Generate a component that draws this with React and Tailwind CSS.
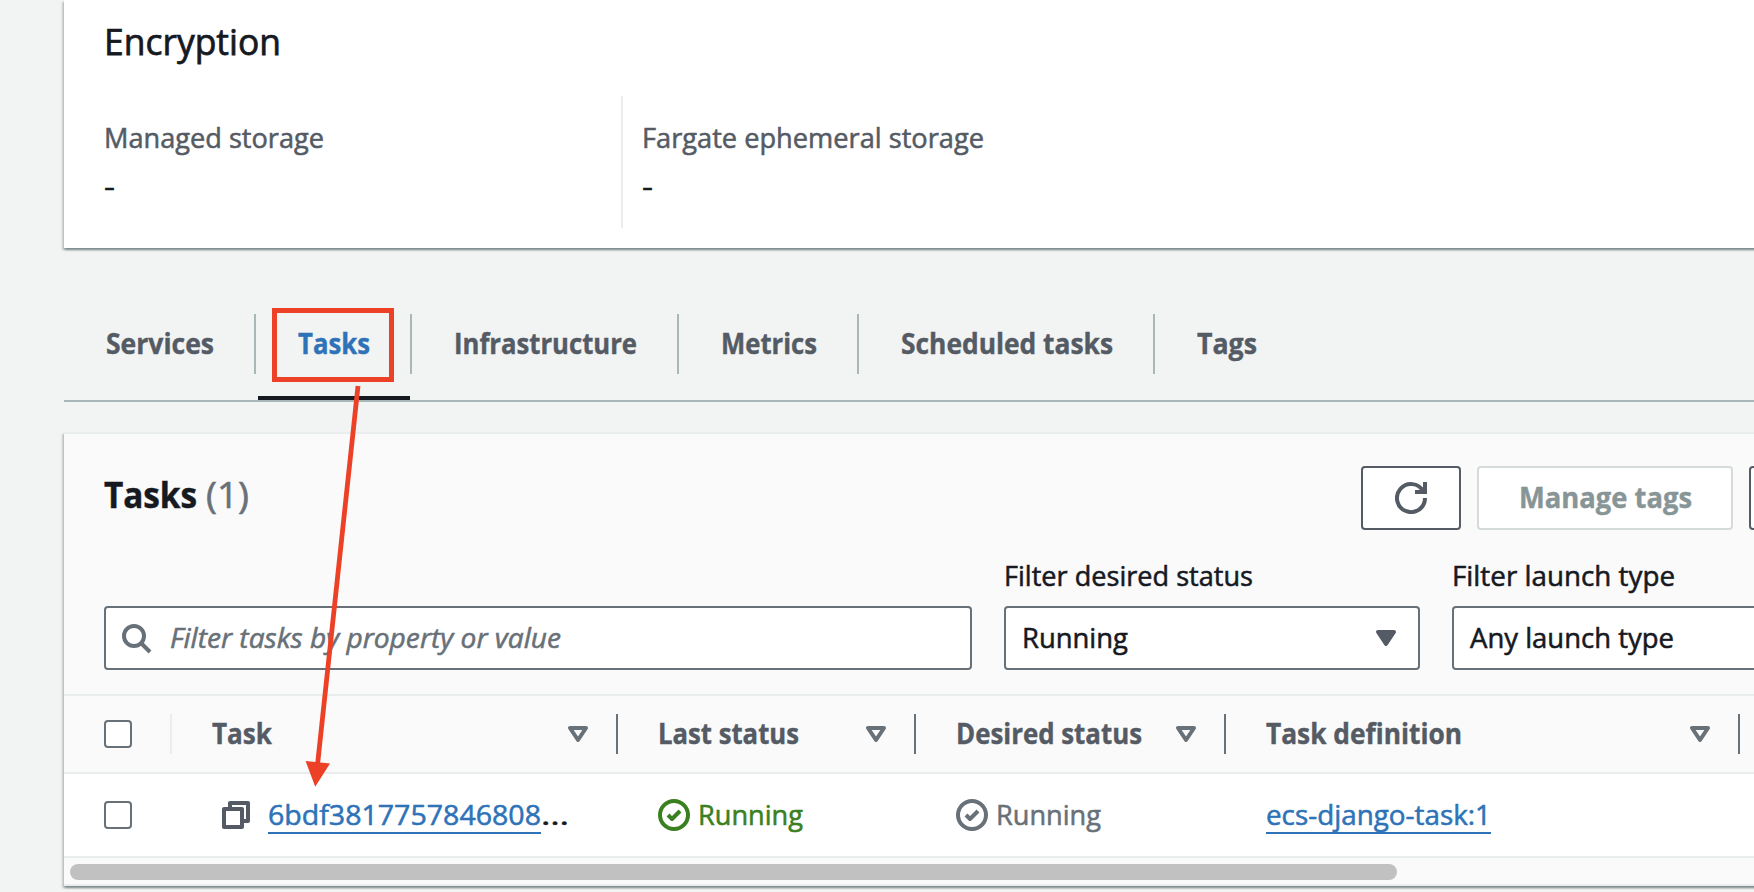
import { useLayoutEffect, useRef } from "react";

/* A single line of text condensed or widened to fill the width of its box. */
function Fit({ as: Tag = "span", className = "", children }) {
  const box = useRef(null);
  const line = useRef(null);
  useLayoutEffect(() => {
    const ratio = box.current.offsetWidth / line.current.getBoundingClientRect().width;
    line.current.style.transform = `scaleX(${ratio})`;
  }, []);
  return (
    <Tag ref={box} className={`block shrink-0 whitespace-nowrap ${className}`}>
      <span ref={line} className="inline-block origin-left">
        {children}
      </span>
    </Tag>
  );
}

const body = "h-10 text-[28px] leading-10 [-webkit-text-stroke:0.55px]";
const strong = "h-10 text-[28px] leading-10 font-bold [-webkit-text-stroke:0.4px]";

function Divider({ className }) {
  return <div className={`w-0.5 shrink-0 ${className}`} />;
}

function Checkbox() {
  return <div className="size-7 shrink-0 rounded-[4px] border-2 border-[#687078] bg-white" />;
}

function Caret({ filled }) {
  return (
    <svg viewBox="0 0 16 16" className={`size-8 shrink-0 ${filled ? "text-[#545b64]" : "text-[#687078]"}`}>
      <path
        d="M4 5h8l-4 6-4-6z"
        fill={filled ? "currentColor" : "none"}
        stroke="currentColor"
        strokeWidth="2"
        strokeLinejoin="round"
      />
    </svg>
  );
}

function StatusIcon() {
  return (
    <svg viewBox="0 0 16 16" className="size-8 shrink-0" fill="none" stroke="currentColor" strokeWidth="2">
      <circle cx="8" cy="8" r="7" />
      <path d="m5 8 2 2 4-4" strokeLinejoin="round" />
    </svg>
  );
}

function SearchIcon() {
  return (
    <svg viewBox="0 0 16 16" className="size-8 shrink-0" fill="none" stroke="#687078" strokeWidth="2">
      <circle cx="7" cy="7" r="5" />
      <path d="m15 15-4.5-4.5" />
    </svg>
  );
}

function RefreshIcon() {
  return (
    <svg viewBox="0 0 32 32" className="size-8 shrink-0" fill="none" stroke="#545b64" strokeWidth="4">
      <path d="M30 16A14 14 0 1 1 28.2 9.2" />
      <path d="M20 10h10V0" />
    </svg>
  );
}

function CopyIcon() {
  return (
    <svg
      viewBox="0 0 28 28"
      className="size-7 shrink-0"
      fill="none"
      stroke="#545b64"
      strokeWidth="4"
      strokeLinejoin="round"
    >
      <path d="M2 8h18v18H2z" />
      <path d="M8 6V2h18v18h-4" />
    </svg>
  );
}

const panelShadow =
  "shadow-[0_2px_2px_0_rgba(0,28,36,0.3),2px_2px_2px_0_rgba(0,28,36,0.15),-2px_2px_2px_0_rgba(0,28,36,0.15)]";

function EncryptionPanel() {
  return (
    <section className={`h-[248px] bg-white pt-[18px] pl-10 ${panelShadow}`}>
      <Fit as="h2" className="h-12 w-[177px] text-[36px] leading-12 [-webkit-text-stroke:0.75px]">
        Encryption
      </Fit>
      <div className="mt-[30px] flex h-[132px]">
        <div className="w-[517px] shrink-0 pt-[21px]">
          <Fit className={`w-[220px] text-[#545b64] ${body}`}>Managed storage</Fit>
          <Fit className={`mt-2 w-[11px] ${body}`}>-</Fit>
        </div>
        <div className="border-l-2 border-[#eaeded] pt-[21px] pl-[19px]">
          <Fit className={`w-[342px] text-[#545b64] ${body}`}>Fargate ephemeral storage</Fit>
          <Fit className={`mt-2 w-[11px] ${body}`}>-</Fit>
        </div>
      </div>
    </section>
  );
}

const tabs = [
  { label: "Services", cell: "w-[190px]", text: "w-[108px]" },
  { label: "Tasks", cell: "w-[154px]", text: "w-[72px]", active: true },
  { label: "Infrastructure", cell: "w-[265px]", text: "w-[183px]" },
  { label: "Metrics", cell: "w-[178px]", text: "w-[96px]" },
  { label: "Scheduled tasks", cell: "w-[294px]", text: "w-[212px]" },
  { label: "Tags", cell: "w-[150px]", text: "w-[60px]" },
];

function Tabs() {
  return (
    <nav className="mt-14 flex h-[98px] border-b-2 border-[#aab7b8]">
      {tabs.map((tab, i) => (
        <div key={tab.label} className="flex shrink-0">
          <div className={`flex flex-col justify-between pt-[19px] ${tab.cell}`}>
            <Fit className={`ml-[42px] ${tab.text} ${strong} ${tab.active ? "text-[#2e73b8]" : "text-[#545b64]"}`}>
              {tab.label}
            </Fit>
            {tab.active && <div className="ml-0.5 h-1 bg-[#16191f]" />}
          </div>
          {i < tabs.length - 1 && <Divider className="mt-2.5 h-[60px] bg-[#aab7b8]" />}
        </div>
      ))}
    </nav>
  );
}

function Select({ label, labelWidth, children }) {
  return (
    <div className="w-[416px] shrink-0">
      <Fit className={`${labelWidth} ${body}`}>{label}</Fit>
      <div className="mt-[11px] flex h-16 items-center justify-between rounded-[4px] border-2 border-[#687078] bg-white pr-4 pl-4">
        {children}
        <Caret filled />
      </div>
    </div>
  );
}

function HeaderCell({ width, textWidth, children }) {
  return (
    <>
      <div className={`flex shrink-0 items-center justify-between pr-[22px] pl-10 ${width}`}>
        <Fit className={`mb-0.5 text-[#545b64] ${textWidth} ${strong}`}>{children}</Fit>
        <Caret />
      </div>
      <Divider className="h-10 bg-[#687078]" />
    </>
  );
}

function Status({ width, color }) {
  return (
    <div className={`flex shrink-0 items-center pl-10 ${color} ${width}`}>
      <StatusIcon />
      <Fit className={`mb-0.5 ml-2 w-[105px] ${body}`}>Running</Fit>
    </div>
  );
}

const link = "mb-0.5 text-[#2e73b8] shadow-[inset_0_-2px_0_#2e73b8]";

function TasksPanel() {
  return (
    <section className={`mt-[30px] h-[454px] border-y-2 border-[#eaeded] bg-[#fafafa] ${panelShadow}`}>
      <header className="flex pt-8 pl-10">
        <div className="flex w-[1257px] shrink-0 pt-[5px]">
          <Fit as="h2" className="h-12 w-[93px] text-[36px] leading-12 font-bold [-webkit-text-stroke:0.5px]">
            Tasks
          </Fit>
          <Fit className="ml-[9px] h-12 w-[43px] text-[36px] leading-12 text-[#687078] [-webkit-text-stroke:0.6px]">
            (1)
          </Fit>
        </div>
        <div className="flex gap-4">
          <button className="flex h-16 w-[100px] shrink-0 items-center justify-center rounded-[4px] border-2 border-[#545b64] bg-white">
            <RefreshIcon />
          </button>
          <button className="flex h-16 w-64 shrink-0 items-center justify-center rounded-[4px] border-2 border-[#d5dbdb] bg-white">
            <Fit className={`mb-0.5 w-[173px] text-[#879596] ${strong}`}>Manage tags</Fit>
          </button>
          <button className="h-16 w-40 shrink-0 rounded-[4px] border-2 border-[#545b64] bg-white" />
        </div>
      </header>

      <div className="mt-[25px] flex items-end gap-8 pl-10">
        <div className="flex h-16 w-[868px] shrink-0 items-center rounded-[4px] border-2 border-[#687078] bg-white pl-3.5">
          <SearchIcon />
          <Fit className={`mb-0.5 ml-[18px] w-[391px] text-[#687078] italic ${body}`}>
            Filter tasks by property or value
          </Fit>
        </div>
        <Select label="Filter desired status" labelWidth="w-[249px]">
          <Fit className={`mb-0.5 w-[106px] ${body}`}>Running</Fit>
        </Select>
        <Select label="Filter launch type" labelWidth="w-[223px]">
          <Fit className={`mb-0.5 w-[204px] ${body}`}>Any launch type</Fit>
        </Select>
      </div>

      <div className="mt-6 flex h-20 items-center border-y-2 border-[#eaeded]">
        <div className="w-[106px] shrink-0 pl-10">
          <Checkbox />
        </div>
        <Divider className="h-10 bg-[#eaeded]" />
        <HeaderCell width="w-[444px]" textWidth="w-[60px]">
          Task
        </HeaderCell>
        <HeaderCell width="w-[296px]" textWidth="w-[141px]">
          Last status
        </HeaderCell>
        <HeaderCell width="w-[308px]" textWidth="w-[186px]">
          Desired status
        </HeaderCell>
        <HeaderCell width="w-[512px]" textWidth="w-[196px]">
          Task definition
        </HeaderCell>
      </div>

      <div className="flex h-[84px] items-center border-b-2 border-[#eaeded] bg-white">
        <div className="w-[158px] shrink-0 pl-10">
          <Checkbox />
        </div>
        <div className="flex w-[396px] shrink-0 items-center">
          <CopyIcon />
          <Fit as="a" className={`ml-[18px] w-[273px] ${link} ${body}`}>
            6bdf3817757846808
          </Fit>
          <Fit className={`mb-0.5 w-7 ${body}`}>…</Fit>
        </div>
        <Status width="w-[298px]" color="text-[#3a8020]" />
        <Status width="w-[310px]" color="text-[#687078]" />
        <Fit as="a" className={`ml-10 w-[225px] ${link} ${body}`}>
          ecs-django-task:1
        </Fit>
      </div>

      <div className="mt-1.5 ml-1.5 h-4 w-[1327px] rounded-full bg-[#c1c1c1]" />
    </section>
  );
}

/* Callout drawn over the page: a frame round the Tasks tab and an arrow to the task link. */
function Annotation() {
  return (
    <svg viewBox="0 0 1754 892" className="pointer-events-none absolute inset-0 h-[892px] w-[1754px]">
      <rect x="274.5" y="310.5" width="117" height="69" fill="none" stroke="#ec4126" strokeWidth="5" />
      <path d="M358 386 317.6 764" fill="none" stroke="#ec4126" strokeWidth="4.8" />
      <path d="M305.6 761 330 763.4 315.2 786.7z" fill="#ec4126" />
    </svg>
  );
}

export default function App() {
  return (
    <main className="relative h-[892px] w-full overflow-hidden bg-[#f2f3f3] pl-16 font-['Open_Sans','Noto_Sans',sans-serif] text-[#16191f]">
      <div className="w-[1800px]">
        <EncryptionPanel />
        <Tabs />
        <TasksPanel />
      </div>
      <Annotation />
    </main>
  );
}
